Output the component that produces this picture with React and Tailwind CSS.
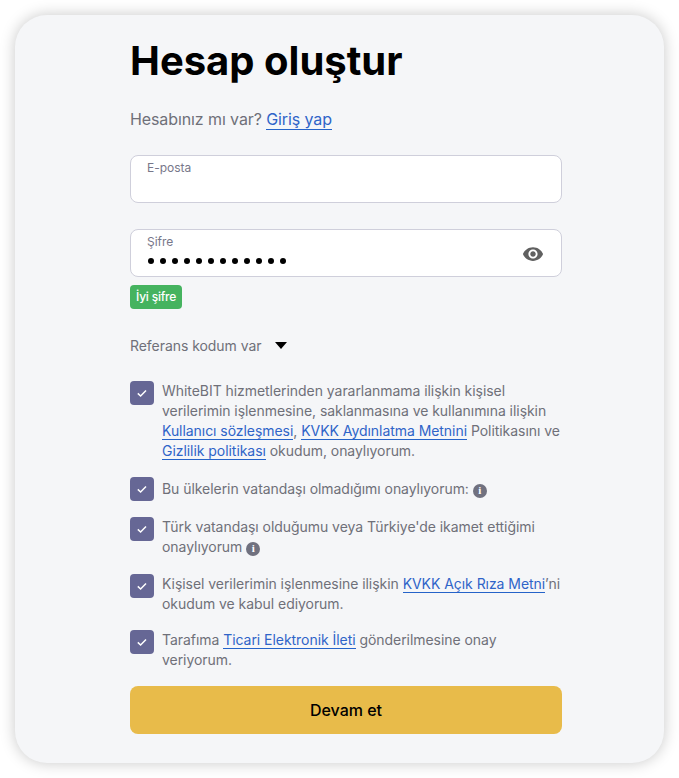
function Check() {
  return (
    <div className="flex h-6 w-6 shrink-0 items-center justify-center rounded-[4px] bg-[#666795]">
      <svg width="12" height="12" viewBox="0 0 12 12" fill="none">
        <path d="M1.8 6.4 L4.6 9 L10 3.4" stroke="#ffffff" strokeWidth="1.5" />
      </svg>
    </div>
  );
}

function TextLink({ children }) {
  return <a className="border-b border-[#2563c9] text-[#2f64c8]">{children}</a>;
}

function InfoDot() {
  return (
    <span className="inline-flex h-[14px] w-[14px] items-center justify-center rounded-full bg-[#70717f] align-baseline font-['Liberation_Serif',serif] text-[11px] font-bold leading-none text-white">
      i
    </span>
  );
}

function Agreement({ children, className, textClass }) {
  return (
    <div className={`flex gap-2 ${className}`}>
      <Check />
      <p className={`text-[14px] leading-5 tracking-[-0.05px] text-[#6f7079] ${textClass}`}>{children}</p>
    </div>
  );
}

export default function App() {
  return (
    <div className="h-[778px] w-[679px] bg-white p-[15px] font-['Inter',sans-serif]">
      <div className="h-[748px] w-[649px] rounded-[32px] bg-[#f5f6f8] pl-[115px] pr-[102px] pt-5 shadow-[0_0_15px_rgba(0,0,0,0.22)]">
        <h1 className="text-[40px] font-bold leading-[52px] text-black">Hesap oluştur</h1>

        <p className="mt-[20px] text-[16px] leading-6 tracking-[-0.1px] text-[#6f7079]">
          Hesabınız mı var? <TextLink>Giriş yap</TextLink>
        </p>

        <div className="mt-6 h-12 w-full rounded-[8px] border border-[#cfcfdb] bg-white px-4 pt-[4px] text-[12px] leading-4 text-[#77778a]">
          E-posta
        </div>

        <div className="mt-[26px] flex h-12 w-full items-start justify-between rounded-[8px] border border-[#cfcfdb] bg-white pl-4 pr-[17px] pt-[4px]">
          <div>
            <div className="text-[12px] leading-4 text-[#77778a]">Şifre</div>
            <div className="ml-[1px] mt-[8px] flex gap-[6px]">
              {Array.from({ length: 12 }).map((_, i) => (
                <span key={i} className="h-[6px] w-[6px] rounded-full bg-black" />
              ))}
            </div>
          </div>
          <svg width="22" height="22" viewBox="0 0 24 24" fill="#606060" className="mt-[9px]">
            <path d="M12 4.5C7 4.5 2.73 7.61 1 12c1.73 4.39 6 7.5 11 7.5s9.27-3.11 11-7.5c-1.73-4.39-6-7.5-11-7.5zM12 17c-2.76 0-5-2.24-5-5s2.24-5 5-5 5 2.24 5 5-2.24 5-5 5zm0-8c-1.66 0-3 1.34-3 3s1.34 3 3 3 3-1.34 3-3-1.34-3-3-3z" />
          </svg>
        </div>

        <div className="mt-2 h-6 w-fit rounded-[4px] bg-[#45b35f] px-[6px] text-[12px] font-medium leading-6 tracking-[-0.2px] text-white">
          İyi şifre
        </div>

        <div className="mt-[27px] flex items-center text-[14px] leading-5 tracking-[-0.05px] text-[#6f7079]">
          Referans kodum var
          <span className="ml-[14px] h-0 w-0 -translate-y-px border-x-[6px] border-t-[7px] border-x-transparent border-t-black" />
        </div>

        <Agreement className="mt-[25px]">
          WhiteBIT hizmetlerinden yararlanmama ilişkin kişisel verilerimin işlenmesine, saklanmasına ve kullanımına ilişkin{' '}
          <TextLink>Kullanıcı sözleşmesi</TextLink>, <TextLink>KVKK Aydınlatma Metnini</TextLink> Politikasını ve{' '}
          <TextLink>Gizlilik politikası</TextLink> okudum, onaylıyorum.
        </Agreement>

        <Agreement className="mt-4 items-start" textClass="pt-[2px]">
          Bu ülkelerin vatandaşı olmadığımı onaylıyorum: <InfoDot />
        </Agreement>

        <Agreement className="mt-4">
          Türk vatandaşı olduğumu veya Türkiye'de ikamet ettiğimi onaylıyorum <InfoDot />
        </Agreement>

        <Agreement className="mt-[16.5px]">
          Kişisel verilerimin işlenmesine ilişkin <TextLink>KVKK Açık Rıza Metni</TextLink>’ni okudum ve kabul ediyorum.
        </Agreement>

        <Agreement className="mt-4">
          Tarafıma <TextLink>Ticari Elektronik İleti</TextLink> gönderilmesine onay veriyorum.
        </Agreement>

        <button className="mt-4 h-12 w-full rounded-[8px] bg-[#e8bb4a] text-[16px] font-medium text-black">
          Devam et
        </button>
      </div>
    </div>
  );
}
